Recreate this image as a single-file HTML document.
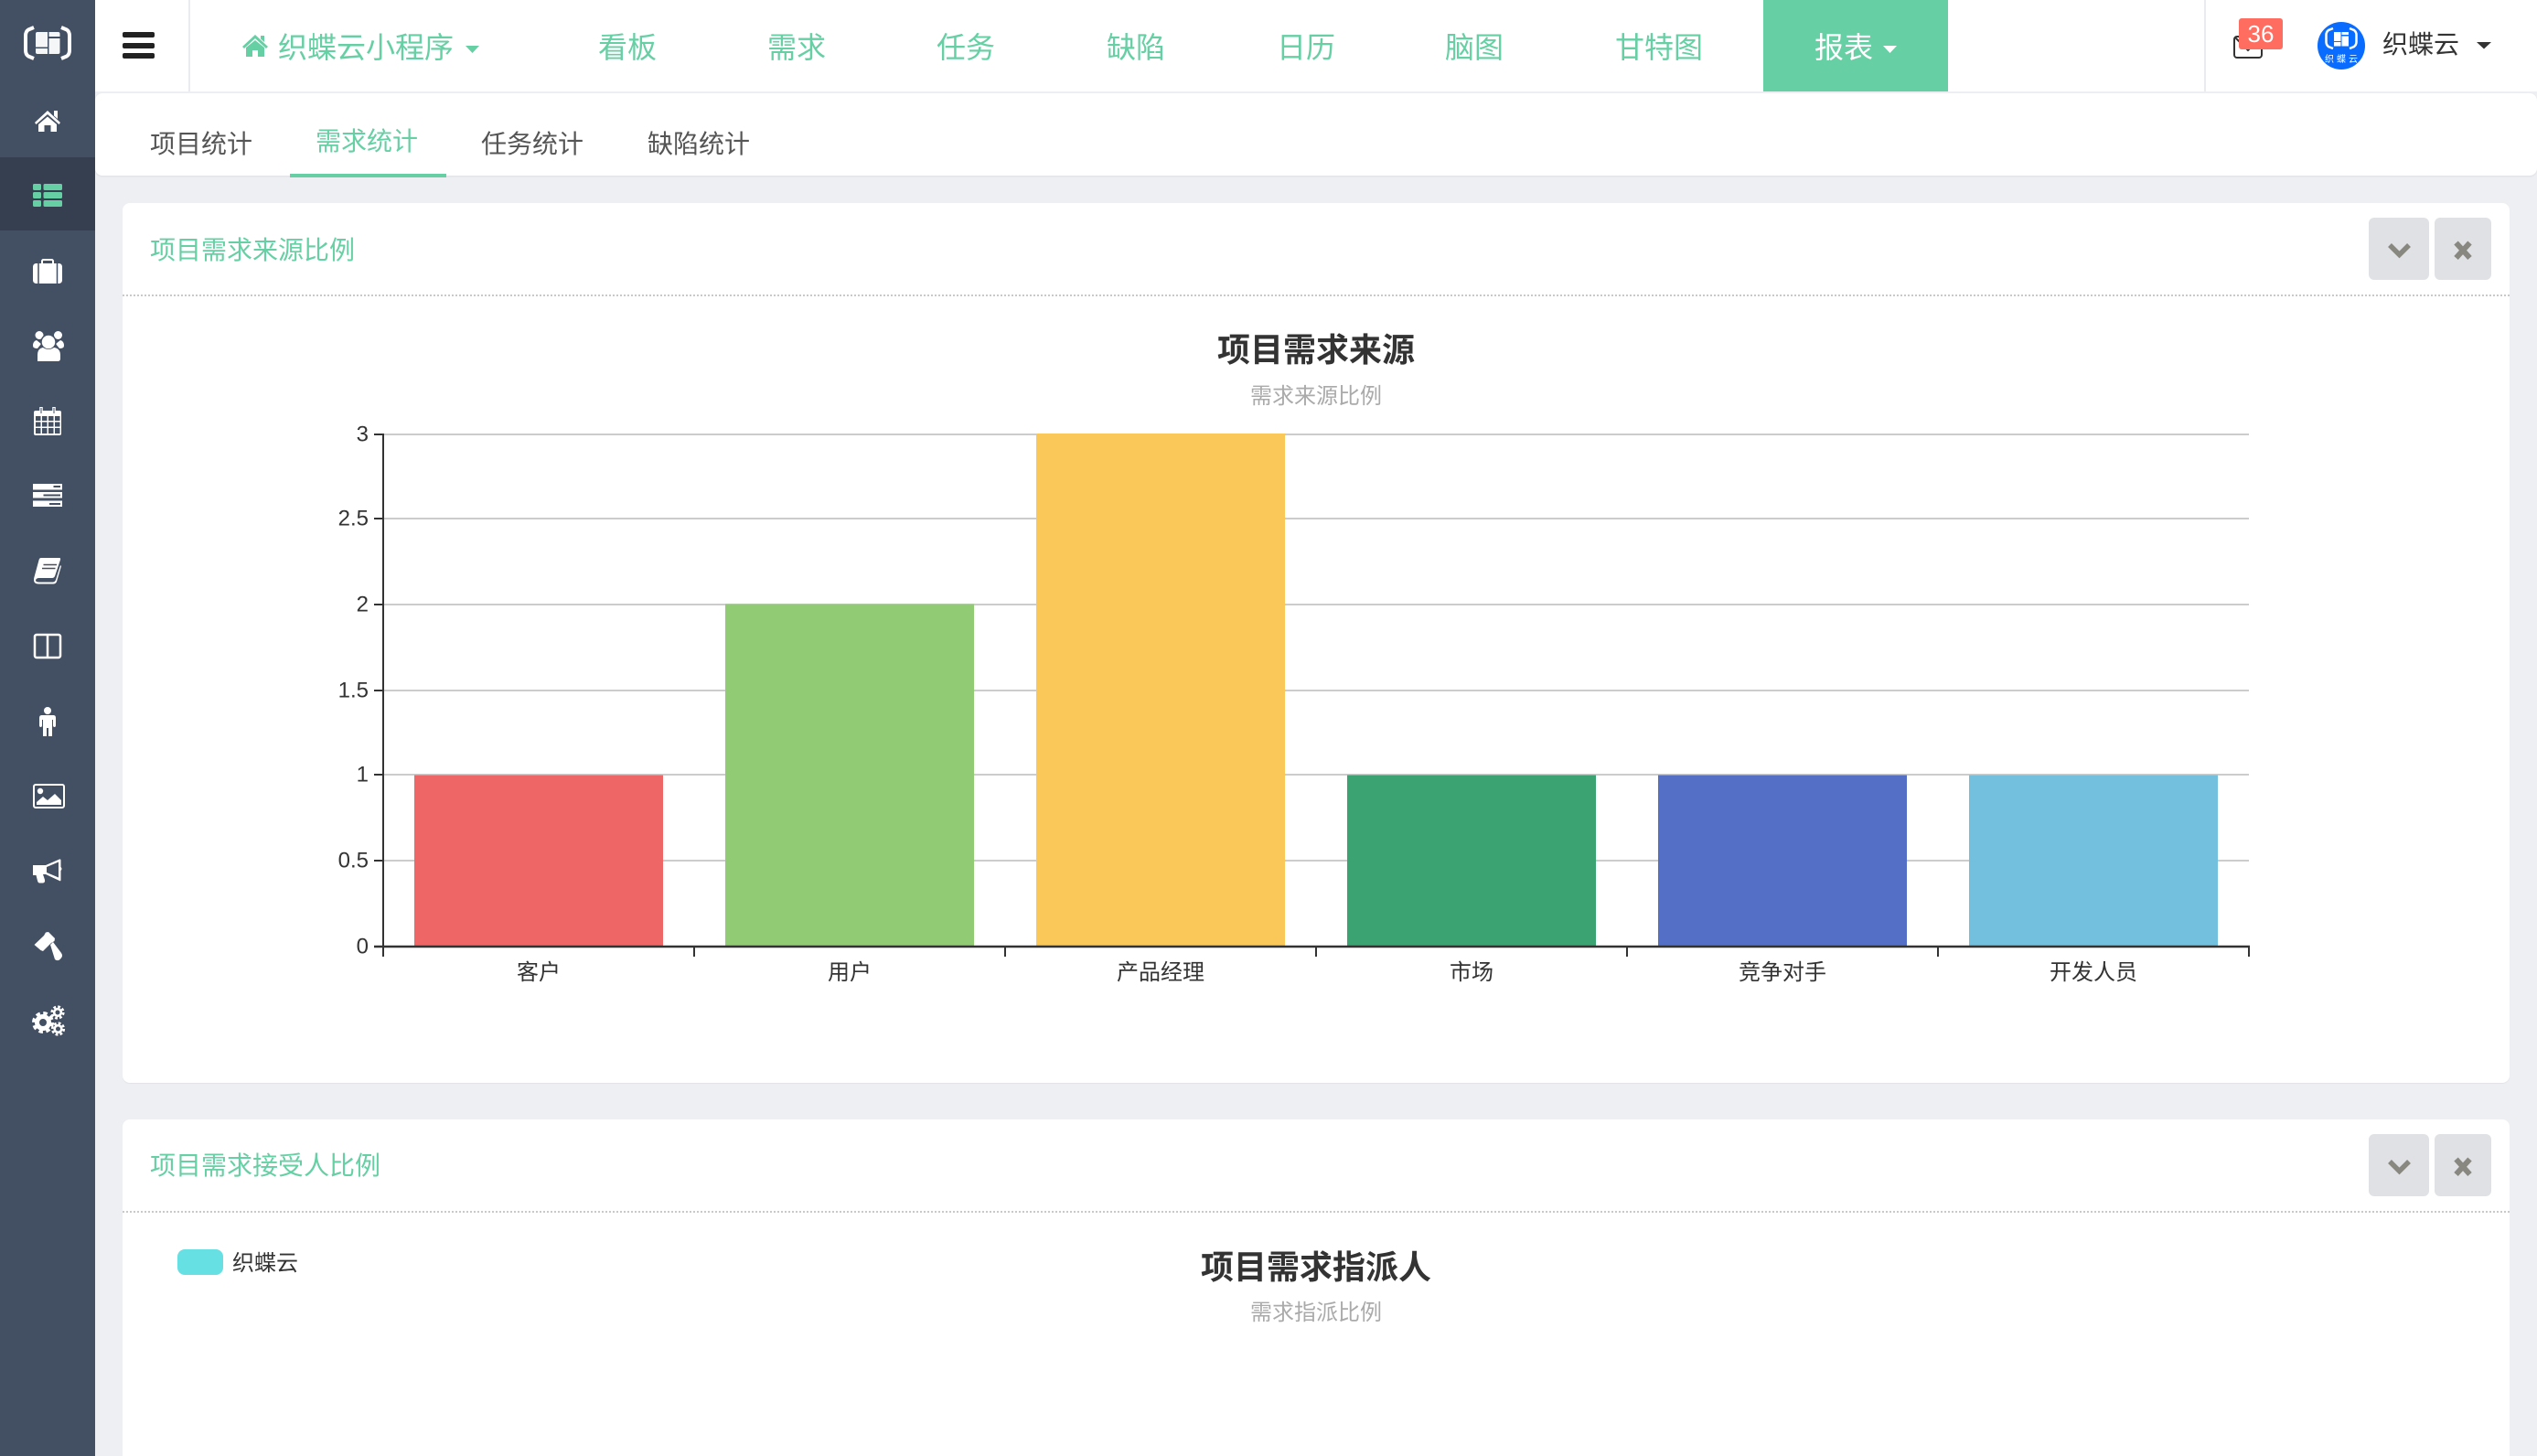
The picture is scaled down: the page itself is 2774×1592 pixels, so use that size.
<!DOCTYPE html>
<html lang="zh-CN">
<head>
<meta charset="utf-8">
<title>需求统计</title>
<style>
html,body{margin:0;padding:0;width:2774px;height:1592px;overflow:hidden;background:#eeeff3;font-family:"Liberation Sans","Noto Sans CJK SC",sans-serif;}
.a{position:absolute;}
.t{position:absolute;white-space:nowrap;line-height:1;}
.g{color:#66cfa4;}
.nav{font-size:32px;top:36px;color:#66cfa4;}
.tab{font-size:28px;color:#555;}
.tab.on{color:#66cfa4;}
.btn{position:absolute;background:#e0e1e4;border-radius:6px;}
svg{position:absolute;left:0;top:0;overflow:visible;}
</style>
</head>
<body>
<!-- top bar -->
<div class="a" style="left:104px;top:0;width:2670px;height:100px;background:#fff;"></div>
<div class="a" style="left:206px;top:0;width:2px;height:100px;background:#eaebee;"></div>
<div class="a" style="left:2410px;top:0;width:2px;height:100px;background:#eaebee;"></div>
<div class="a" style="left:1928px;top:0;width:202px;height:100px;background:#66cfa4;"></div>

<!-- tab bar -->
<div class="a" style="left:104px;top:102px;width:2670px;height:90px;background:#fff;border-radius:8px;box-shadow:0 1px 2px rgba(0,0,0,.07);"></div>
<div class="a" style="left:317px;top:190px;width:171px;height:4px;background:#66cfa4;"></div>

<!-- panels -->
<div class="a" style="left:134px;top:222px;width:2610px;height:962px;background:#fff;border-radius:8px;box-shadow:0 1px 1px rgba(0,0,0,.05);"></div>
<div class="a" style="left:134px;top:322px;width:2610px;height:0;border-top:2px dotted #c9c9c9;"></div>
<div class="a" style="left:134px;top:1224px;width:2610px;height:368px;background:#fff;border-radius:8px 8px 0 0;"></div>
<div class="a" style="left:134px;top:1324px;width:2610px;height:0;border-top:2px dotted #c9c9c9;"></div>

<div class="btn" style="left:2590px;top:238px;width:66px;height:68px;"></div>
<div class="btn" style="left:2662px;top:238px;width:62px;height:68px;"></div>
<div class="btn" style="left:2590px;top:1240px;width:66px;height:68px;"></div>
<div class="btn" style="left:2662px;top:1240px;width:62px;height:68px;"></div>

<!-- sidebar -->
<div class="a" style="left:0;top:0;width:104px;height:1592px;background:#434f63;"></div>
<div class="a" style="left:0;top:172px;width:104px;height:80px;background:#353f50;"></div>

<!-- nav text -->
<div class="t nav" style="left:304px;">织蝶云小程序</div>
<div class="t nav" style="left:654px;">看板</div>
<div class="t nav" style="left:839px;">需求</div>
<div class="t nav" style="left:1024px;">任务</div>
<div class="t nav" style="left:1210px;">缺陷</div>
<div class="t nav" style="left:1396px;">日历</div>
<div class="t nav" style="left:1580px;">脑图</div>
<div class="t nav" style="left:1766px;">甘特图</div>
<div class="t nav" style="left:1984px;color:#fff;">报表</div>
<div class="t" style="left:2605px;top:35px;font-size:28px;color:#333;">织蝶云</div>

<!-- tabs -->
<div class="t tab" style="left:164px;top:144px;">项目统计</div>
<div class="t tab on" style="left:345px;top:141px;">需求统计</div>
<div class="t tab" style="left:526px;top:144px;">任务统计</div>
<div class="t tab" style="left:708px;top:144px;">缺陷统计</div>

<!-- panel titles -->
<div class="t g" style="left:164px;top:260px;font-size:28px;">项目需求来源比例</div>
<div class="t g" style="left:164px;top:1261px;font-size:28px;">项目需求接受人比例</div>

<!-- chart titles -->
<div class="t" style="left:1239px;width:400px;text-align:center;top:365px;font-size:36px;font-weight:bold;color:#333;">项目需求来源</div>
<div class="t" style="left:1239px;width:400px;text-align:center;top:422px;font-size:24px;color:#aaa;">需求来源比例</div>
<div class="t" style="left:1239px;width:400px;text-align:center;top:1368px;font-size:36px;font-weight:bold;color:#333;">项目需求指派人</div>
<div class="t" style="left:1239px;width:400px;text-align:center;top:1424px;font-size:24px;color:#aaa;">需求指派比例</div>

<!-- legend -->
<div class="a" style="left:194px;top:1366px;width:50px;height:28px;background:#67e0e3;border-radius:8px;"></div>
<div class="t" style="left:254px;top:1370px;font-size:24px;color:#333;">织蝶云</div>

<svg width="2774" height="1592" viewBox="0 0 2774 1592">
  <!-- hamburger -->
  <g fill="#222">
    <rect x="134" y="35" width="35" height="6" rx="2"/>
    <rect x="134" y="47" width="35" height="6" rx="2"/>
    <rect x="134" y="58" width="35" height="6" rx="2"/>
  </g>
  <!-- nav home -->
  <path d="M265 51 L279 38 L293 51 L291 53 L279 42 L267 53Z M285 39h4v7l-4-3.500Z M269 52 L279 44 L289 52 V62 H282 V55 H276 V62 H269Z" fill="#66cfa4"/>
  <!-- carets -->
  <path d="M509 50h15l-7.500 8Z" fill="#66cfa4"/>
  <path d="M2059 50h15l-7.500 8Z" fill="#fff"/>
  <path d="M2708 46h16l-8 7.500Z" fill="#333"/>
  <!-- envelope + badge -->
  <rect x="2443" y="40" width="30" height="23" rx="3" fill="none" stroke="#333" stroke-width="2"/>
  <path d="M2444 41L2458 55L2472 41" fill="none" stroke="#333" stroke-width="2"/>
  <rect x="2448" y="20" width="48" height="34" rx="3" fill="#ff6c60"/>
  <text x="2472" y="46" font-size="26" fill="#fff" text-anchor="middle">36</text>
  <!-- avatar -->
  <circle cx="2560" cy="50" r="26" fill="#0a6cff"/>
  <g fill="none" stroke="#fff" stroke-width="2.500">
    <path d="M2551 31 L2546 33 Q2543.500 35 2543.500 38 V46 Q2543.500 49 2546 51 L2551 53"/>
    <path d="M2569 31 L2574 33 Q2576.500 35 2576.500 38 V46 Q2576.500 49 2574 51 L2569 53"/>
  </g>
  <g fill="#fff">
    <rect x="2552" y="35" width="7.500" height="10"/><rect x="2552" y="46" width="7.500" height="4.500"/>
    <rect x="2560.500" y="35" width="7.500" height="3"/><rect x="2560.500" y="39.500" width="7.500" height="11"/>
  </g>
  <text x="2561.500" y="68" font-size="10" fill="#fff" text-anchor="middle" letter-spacing="3">织蝶云</text>
  <!-- panel button glyphs -->
  <g fill="none" stroke="#888780">
    <path stroke-width="5.500" d="M2613 268l10.500 10.500 10.500-10.500"/>
    <path stroke-width="5.500" d="M2613 1270l10.500 10.500 10.500-10.500"/>
    <path stroke-width="6" d="M2685.500 265.500l15 16.500M2700.500 265.500l-15 16.500"/>
    <path stroke-width="6" d="M2685.500 1267.500l15 16.500M2700.500 1267.500l-15 16.500"/>
  </g>
  <!-- sidebar logo -->
  <g fill="none" stroke="#fff" stroke-width="4">
    <path d="M37 30 L31 32.500 Q28 34.500 28 39 V55 Q28 59.500 31 61.500 L37 64"/>
    <path d="M67 30 L73 32.500 Q76 34.500 76 39 V55 Q76 59.500 73 61.500 L67 64"/>
  </g>
  <g fill="#fff" opacity=".95">
    <path d="M41 35h11v16.500H39V37q0-2 2-2Z"/>
    <path d="M39 53h13v6H41q-2 0-2-2Z"/>
    <path d="M53.500 35h10q2 0 2 2v3h-12Z"/>
    <path d="M53.500 42h12v15q0 2-2 2h-10Z"/>
  </g>
  <!-- home -->
  <g fill="#fff">
    <path d="M38 134 L52 121 L66 134 L64.500 136 L52 125 L39.500 136Z"/>
    <path d="M59 121h4v9l-4-3.500Z"/>
    <path d="M42 136 L52 127.500 L62 136 V144 H55.500 V137 H48.500 V144 H42Z"/>
  </g>
  <!-- list -->
  <g fill="#66cfa4">
    <rect x="36" y="201" width="9" height="7" rx="1.500"/><rect x="47.500" y="201" width="20.500" height="7" rx="1.500"/>
    <rect x="36" y="210" width="9" height="7" rx="1.500"/><rect x="47.500" y="210" width="20.500" height="7" rx="1.500"/>
    <rect x="36" y="219" width="9" height="7" rx="1.500"/><rect x="47.500" y="219" width="20.500" height="7" rx="1.500"/>
  </g>
  <!-- briefcase -->
  <rect x="46" y="284" width="12" height="6" rx="1.500" fill="none" stroke="#fff" stroke-width="2"/>
  <rect x="36" y="288" width="32" height="22" rx="3.500" fill="#fff"/>
  <path d="M42 288v22M62.500 288v22" stroke="#434f63" stroke-width="1.500"/>
  <!-- users -->
  <g fill="#fff">
    <circle cx="43" cy="366.500" r="4.500"/><circle cx="63.500" cy="366.500" r="4.500"/>
    <path d="M40 372 Q36 373 36 378 Q36 381 41 381 L45 376Z"/>
    <path d="M66 372 Q70 373 70 378 Q70 381 65 381 L61 376Z"/>
  </g>
  <circle cx="53" cy="374" r="8" fill="#fff" stroke="#434f63" stroke-width="1.500"/>
  <path d="M41 395 V388 Q41 381 47 380 Q53 384 59 380 Q66 381 66 388 V392 Q66 395 63 395Z" fill="#fff"/>
  <!-- calendar -->
  <path d="M39 449 H65 Q67 449 67 451 V474 Q67 476 65 476 H39 Q37 476 37 474 V451 Q37 449 39 449Z" fill="#fff"/>
  <path d="M45 445v7M59 445v7" stroke="#fff" stroke-width="3.500"/>
  <path d="M45 446v6M59 446v6" stroke="#434f63" stroke-width="1"/>
  <g fill="#434f63">
    <rect x="39" y="455" width="5.500" height="5"/><rect x="46" y="455" width="5.500" height="5"/><rect x="53" y="455" width="5.500" height="5"/><rect x="60" y="455" width="5.500" height="5"/>
    <rect x="39" y="461.500" width="5.500" height="5"/><rect x="46" y="461.500" width="5.500" height="5"/><rect x="53" y="461.500" width="5.500" height="5"/><rect x="60" y="461.500" width="5.500" height="5"/>
    <rect x="39" y="468" width="5.500" height="6"/><rect x="46" y="468" width="5.500" height="6"/><rect x="53" y="468" width="5.500" height="6"/><rect x="60" y="468" width="5.500" height="6"/>
  </g>
  <!-- tasks -->
  <g fill="#fff">
    <rect x="36" y="529" width="32" height="6.500"/><rect x="36" y="538" width="32" height="6.500"/><rect x="36" y="547.500" width="32" height="6.500"/>
  </g>
  <g fill="#434f63">
    <rect x="58.500" y="531" width="7.500" height="2"/><rect x="47.500" y="540.500" width="18.500" height="2"/><rect x="54" y="550" width="12" height="2"/>
  </g>
  <!-- book -->
  <path d="M45 610 H65 Q66.500 610 66 612 L60 630 Q59 632 57 632 H43 Q39.500 632 39 634.500 Q39 636.500 43 636.500 H58 Q60 636.500 61 634 L66 618 L67 619 L62 636 Q61 638.500 58 638.500 H42 Q37 638.500 37 634 Q37 632 38 629 L42.500 612.500 Q43 610 45 610Z" fill="#fff"/>
  <path d="M47.500 617.500H62M46 621.500H60.500" stroke="#434f63" stroke-width="1.500"/>
  <!-- columns -->
  <rect x="38" y="694" width="28" height="25" rx="2" fill="none" stroke="#fff" stroke-width="2.500"/>
  <path d="M52 694v25" stroke="#fff" stroke-width="2.500"/>
  <!-- person -->
  <g fill="#fff">
    <circle cx="52" cy="777" r="4"/>
    <path d="M45.500 782 H58.500 Q61 782 61 785 V793 Q61 795 59.500 795 Q58 795 58 793 V787 H57 V805 H53 V796 H51 V805 H47 V787 H46 V793 Q46 795 44.500 795 Q43 795 43 793 V785 Q43 782 45.500 782Z"/>
  </g>
  <!-- picture -->
  <rect x="37" y="858" width="33" height="25" rx="2" fill="none" stroke="#fff" stroke-width="2"/>
  <circle cx="44" cy="865" r="3.200" fill="#fff"/>
  <path d="M40 880 V877 L47 871 L52 875 L60 868 L67 875 V880Z" fill="#fff"/>
  <!-- bullhorn -->
  <path d="M36 946 H50 L65 939.500 Q66.500 939 66.500 941 V948 Q68.500 950 66.500 952 V962 Q66.500 964 65 963 L50 956 H47 L49 962 Q49.500 965 47 965.500 H43.500 Q41.500 965.500 41 963 L39.500 957 H36 Z" fill="#fff"/>
  <path d="M51 948 L64 942.500 V959.500 L51 954Z" fill="#434f63"/>
  <!-- gavel -->
  <g fill="#fff">
    <path d="M37.500 1033 L48 1023 L50 1019.500 L53 1019 L60 1026 L59.500 1029 L56 1031 L47 1040 L44.500 1039Z"/>
    <path d="M55 1033 L58 1030 L67 1042 Q69 1045 67 1047.500 L65 1049.500 Q62.500 1051 60 1049Z"/>
  </g>
  <!-- cogs -->
  <g fill="none" stroke="#fff">
    <circle cx="47" cy="1118" r="6.500" stroke-width="5"/>
    <circle cx="47" cy="1118" r="10" stroke-width="4" stroke-dasharray="4.400 3.450"/>
    <circle cx="63" cy="1107" r="3.800" stroke-width="2.600"/>
    <circle cx="63" cy="1107" r="6.300" stroke-width="2.600" stroke-dasharray="2.800 2.150"/>
    <circle cx="63.500" cy="1125" r="3.800" stroke-width="2.600"/>
    <circle cx="63.500" cy="1125" r="6.300" stroke-width="2.600" stroke-dasharray="2.800 2.150"/>
  </g>

  <!-- chart grid -->
  <g stroke="#ccc" stroke-width="2">
    <path d="M419 475H2459M419 567H2459M419 661H2459M419 755H2459M419 847H2459M419 941H2459"/>
  </g>
  <!-- bars -->
  <rect x="453" y="847.500" width="272" height="187" fill="#ee6666"/>
  <rect x="793" y="660.500" width="272" height="374" fill="#91cc75"/>
  <rect x="1133" y="474" width="272" height="560.500" fill="#fac858"/>
  <rect x="1473" y="847.500" width="272" height="187" fill="#3ba272"/>
  <rect x="1813" y="847.500" width="272" height="187" fill="#5470c6"/>
  <rect x="2153" y="847.500" width="272" height="187" fill="#73c0de"/>
  <!-- axes -->
  <g stroke="#333" stroke-width="2" fill="none">
    <path d="M419 474V1046"/>
    <path d="M409 475h10M409 567h10M409 661h10M409 755h10M409 847h10M409 941h10"/>
    <path d="M409 1035H2460" stroke-width="2.500"/>
    <path d="M759 1035v11M1099 1035v11M1439 1035v11M1779 1035v11M2119 1035v11M2459 1035v11"/>
  </g>
  <!-- y labels -->
  <g font-size="24" fill="#333" text-anchor="end">
    <text x="403" y="482.500">3</text>
    <text x="403" y="574.500">2.5</text>
    <text x="403" y="668.500">2</text>
    <text x="403" y="762.500">1.5</text>
    <text x="403" y="854.500">1</text>
    <text x="403" y="948.500">0.5</text>
    <text x="403" y="1042.500">0</text>
  </g>
  <!-- x labels -->
  <g font-size="24" fill="#333" text-anchor="middle">
    <text x="589" y="1071">客户</text>
    <text x="929" y="1071">用户</text>
    <text x="1269" y="1071">产品经理</text>
    <text x="1609" y="1071">市场</text>
    <text x="1949" y="1071">竞争对手</text>
    <text x="2289" y="1071">开发人员</text>
  </g>
</svg>
</body>
</html>
